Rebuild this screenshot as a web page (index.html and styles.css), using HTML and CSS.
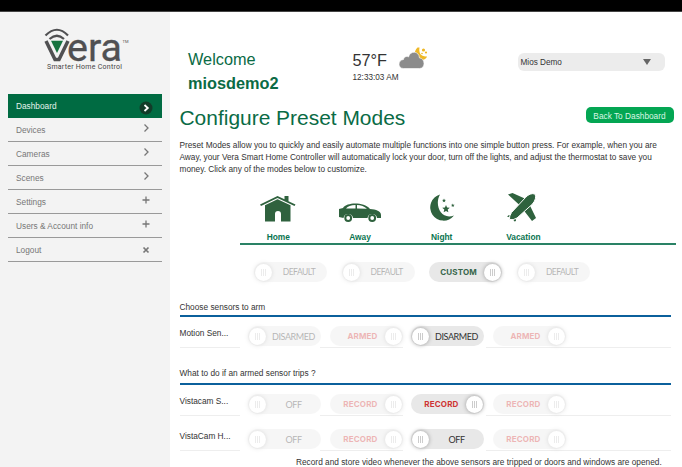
FILE: index.html
```html
<!DOCTYPE html>
<html lang="en">
<head>
<meta charset="utf-8">
<title>Vera - Configure Preset Modes</title>
<link rel="stylesheet" href="styles.css">
</head>
<body>
<div class="topbar"></div>
<div class="page">
  <aside class="sidebar">
    <div class="logo">
      <svg class="logo-art" width="90" height="50" viewBox="0 0 90 50">
        <g fill="none" stroke="#505052" stroke-width="2.200">
          <path d="M2.500 7.500Q14 -4 25 7.500"/>
          <path d="M6.500 11Q14 4.500 21 11"/>
        </g>
        <path d="M3 13L12 31.500H16L25 13" fill="none" stroke="#505052" stroke-width="3.500"/>
        <path d="M8 12.800H20L14 25Z" fill="#16733f"/>
        <text class="logo-word" x="24" y="33" textLength="55" lengthAdjust="spacingAndGlyphs">era</text>
        <text class="logo-tm" x="79.500" y="15">TM</text>
        <text class="logo-tag" x="4" y="40.500" textLength="75">Smarter Home Control</text>
      </svg>
    </div>
    <nav class="nav">
      <a class="item active"><span>Dashboard</span><svg width="14" height="14" viewBox="0 0 14 14"><circle cx="7" cy="7" r="6.500" fill="#123b29"/><path d="M5.500 4L8.800 7L5.500 10" stroke="#fff" stroke-width="1.800" fill="none"/></svg></a>
      <a class="item"><span>Devices</span><svg class="up" width="14" height="14" viewBox="0 0 14 14"><path d="M5.500 3.500L9 7L5.500 10.500"/></svg></a>
      <a class="item"><span>Cameras</span><svg class="up" width="14" height="14" viewBox="0 0 14 14"><path d="M5.500 3.500L9 7L5.500 10.500"/></svg></a>
      <a class="item"><span>Scenes</span><svg class="up" width="14" height="14" viewBox="0 0 14 14"><path d="M5.500 3.500L9 7L5.500 10.500"/></svg></a>
      <a class="item"><span>Settings</span><svg class="up" width="14" height="14" viewBox="0 0 14 14"><path d="M7 3.500V10.500M3.500 7H10.500"/></svg></a>
      <a class="item"><span>Users &amp; Account info</span><svg class="up" width="14" height="14" viewBox="0 0 14 14"><path d="M7 3.500V10.500M3.500 7H10.500"/></svg></a>
      <a class="item"><span>Logout</span><svg width="14" height="14" viewBox="0 0 14 14"><path d="M4.500 4.500L9.500 9.500M9.500 4.500L4.500 9.500" stroke-width="1.700"/></svg></a>
    </nav>
  </aside>
  <main class="main">
    <header class="header">
      <div class="welcome"><div>Welcome</div><strong>miosdemo2</strong></div>
      <div class="weather">
        <div class="now"><span class="temp">57°F</span>
          <svg width="30" height="22" viewBox="0 0 30 22"><path d="M18.500 .5C14.500 4 15 11 19.500 12.500C23 14 27.500 12 28 9.500C22 10 19.500 6 20.500 .5Z" fill="#eeb827"/><g fill="#eeb827"><circle cx="24.500" cy="3" r="1.600"/><circle cx="27" cy="5.500" r="1.100"/><circle cx="23" cy="6.500" r=".8"/></g><path d="M4.500 21.500C-1.500 21.500 -1.500 13 4.500 12.500C5 9.500 8 9 9.500 10C11 3.500 20 3.500 20.500 11C26 11 27 21.500 20.500 21.500Z" fill="#8b8b8b" stroke="#fff" stroke-width=".6"/></svg>
        </div>
        <div class="clock">12:33:03 AM</div>
      </div>
      <div class="select"><span>Mios Demo</span><i class="caret"></i></div>
    </header>
    <div class="title-row"><h1>Configure Preset Modes</h1><a class="back">Back To Dashboard</a></div>
    <p class="intro">Preset Modes allow you to quickly and easily automate multiple functions into one simple button press. For example, when you are<br>Away, your Vera Smart Home Controller will automatically lock your door, turn off the lights, and adjust the thermostat to save you<br>money. Click any of the modes below to customize.</p>
    <div class="modes">
      <div class="mode">
        <svg width="44" height="32" viewBox="0 0 44 32"><path d="M4 14.500L21.500 6L28.500 9.300V6H32.500V11.300L39.500 14.500L38.500 16L21.500 8L5 16Z"/><path d="M9 15.200L21.500 9.200L34.500 15.200V31.500H25V24Q25 21 22 21Q19 21 19 24V31.500H9Z"/></svg>
        <span>Home</span></div>
      <div class="mode">
        <svg width="44" height="32" viewBox="0 0 44 32"><path d="M1 27V19L5 18C9 12 26 12 32 19C38 19.500 43 21 43 25V28H39A4.800 4.800 0 0 0 29.500 28H15A4.800 4.800 0 0 0 5.500 28Z"/><path d="M8 18.500Q10.500 15 17.500 15V18.500ZM19 15Q25 15 29 18.800L19 18.500Z" fill="#fff"/><g fill="#fff" stroke="#2f623e" stroke-width="2"><circle cx="10.200" cy="28" r="2.900"/><circle cx="34.200" cy="28" r="2.900"/></g></svg>
        <span>Away</span></div>
      <div class="mode">
        <svg width="44" height="32" viewBox="1 0 44 32"><path d="M21 4.500A13.300 13.300 0 1 0 35 25.500C22 30.500 15 15 21 4.500Z"/><path d="M27 15L28.100 17.600L30.800 17.800L28.700 19.600L29.400 22.300L27 20.900L24.600 22.300L25.300 19.600L23.200 17.800L25.900 17.600Z"/><path d="M25 8.500L25.500 9.800L27 9.900L25.900 10.800L26.200 12.200L25 11.500L23.800 12.200L24.100 10.800L23 9.900L24.500 9.800ZM33.800 13.500L34.300 14.700L35.600 14.800L34.600 15.700L34.900 17L33.800 16.300L32.700 17L33 15.700L32 14.800L33.300 14.700Z"/></svg>
        <span>Night</span></div>
      <div class="mode">
        <svg width="44" height="32" viewBox="0 0 44 32"><path d="M7 4.500L11.500 3L26 9.500L35 28L31 31L19 15.500Z"/><path d="M6 26.500L8 25L14.500 27.500L15 31L13.500 31.500L11.500 28.500Z"/><path d="M8.500 29.500Q8 26 10.500 22.500L24.500 7.500Q29 2.500 34 4Q36 8.500 31.500 14L16 28Q12 30.500 8.500 29.500Z" stroke="#fff"/></svg>
        <span>Vacation</span></div>
    </div>
    <div class="presets">
      <div class="switch left faded default"><b>DEFAULT</b><i></i></div>
      <div class="switch left faded default"><b>DEFAULT</b><i></i></div>
      <div class="switch right custom"><b>CUSTOM</b><i></i></div>
      <div class="switch left faded default"><b>DEFAULT</b><i></i></div>
    </div>
    <section class="group first">
      <h2>Choose sensors to arm</h2>
      <div class="row">
        <div class="name">Motion Sen...</div>
        <div class="cell"><div class="switch left faded"><b>DISARMED</b><i></i></div></div>
        <div class="cell lined"><div class="switch right faded red"><b>ARMED</b><i></i></div></div>
        <div class="cell"><div class="switch left"><b>DISARMED</b><i></i></div></div>
        <div class="cell lined last"><div class="switch right faded red"><b>ARMED</b><i></i></div></div>
      </div>
    </section>
    <section class="group second">
      <h2>What to do if an armed sensor trips ?</h2>
      <div class="row">
        <div class="name">Vistacam S...</div>
        <div class="cell"><div class="switch left faded"><b>OFF</b><i></i></div></div>
        <div class="cell lined"><div class="switch right faded red"><b>RECORD</b><i></i></div></div>
        <div class="cell"><div class="switch right red"><b>RECORD</b><i></i></div></div>
        <div class="cell lined last"><div class="switch right faded red"><b>RECORD</b><i></i></div></div>
      </div>
      <div class="row">
        <div class="name">VistaCam H...</div>
        <div class="cell"><div class="switch left faded"><b>OFF</b><i></i></div></div>
        <div class="cell lined"><div class="switch right faded red"><b>RECORD</b><i></i></div></div>
        <div class="cell"><div class="switch left"><b>OFF</b><i></i></div></div>
        <div class="cell lined last"><div class="switch right faded red"><b>RECORD</b><i></i></div></div>
      </div>
    </section>
    <p class="note">Record and store video whenever the above sensors are tripped or doors and windows are opened.</p>
  </main>
</div>
</body>
</html>
```
FILE: styles.css
```css
* { box-sizing: border-box; }
body { margin: 0; height: 467px; overflow: hidden; background: #fff; font-family: "Liberation Sans", Arial, sans-serif; font-size: 8px; color: #333; }
h1, h2, p { margin: 0; font-weight: normal; }
svg, i { display: block; }
.topbar { height: 12px; background: #000; border-bottom: 1px solid #444; }
.page { display: flex; height: 455px; }
.sidebar { width: 170px; flex: none; background: #f3f3f3; }
.logo { height: 82px; padding: 16px 0 0 43px; }
.logo-art { overflow: visible; }
.logo-word { font: 39px Roboto, sans-serif; fill: #505052; stroke: #505052; stroke-width: .3px; }
.logo-tm { font: 4px Roboto, sans-serif; fill: #505052; }
.logo-tag { font: 7px Roboto, sans-serif; fill: #444; }
.nav { margin: 0 8px; }
.item { display: flex; align-items: center; justify-content: space-between; height: 24px; padding: 0 9px 0 8px; border-bottom: 1px solid #999; color: #777; font-size: 8.300px; }
.item svg { fill: none; stroke: #777; stroke-width: 1.3; }
.item svg.up { margin-top: -4px; }
.active { background: #006b42; border: 0; color: #e4f4ec; }
.active svg { stroke: none; margin-top: 3px; }
.main { flex: 1; padding-left: 9.500px; min-width: 0; }
.header { display: flex; height: 87px; }
.welcome { width: 165px; padding: 36px 0 0 8.500px; font-size: 16.300px; line-height: 23.500px; color: #0a6b45; }
.weather { width: 165px; padding: 35px 0 0 8px; }
.now { display: flex; align-items: flex-start; gap: 11px; height: 26px; }
.temp { font-size: 16.300px; line-height: 26px; width: 35px; }
.clock { font-size: 8.200px; line-height: 9px; }
.select { display: flex; align-items: center; justify-content: space-between; width: 147px; height: 18px; margin: 41px 0 0 8.500px; padding: 0 14px 0 2.500px; border-radius: 6px; background: #ececec; font-size: 8.200px; }
.caret { border: 4.500px solid transparent; border-top: 6px solid #666; border-bottom: 0; }
.title-row { display: flex; justify-content: space-between; height: 41px; padding: 7px 8.500px 0 0; }
h1 { font-size: 20.950px; line-height: 24px; color: #0a6b45; }
.back { width: 88px; height: 16px; margin-top: 1px; border-radius: 5px; background: #04a653; color: #d9f6e5; font-size: 8.300px; line-height: 18px; text-align: center; }
.intro { height: 52px; font-size: 8.270px; line-height: 12px; white-space: nowrap; }
.modes { display: grid; grid-template-columns: repeat(4, 81.700px); height: 53px; margin: 0 6px 0 60.500px; border-bottom: 2px solid #2a8265; }
.mode { display: flex; flex-direction: column; align-items: center; padding-right: 5px; color: #0a7550; font-size: 8.400px; font-weight: bold; }
.mode svg { fill: #2f623e; margin: -2px 0 10px; flex: none; }
.mode span { line-height: 10px; }
.presets { display: flex; gap: 14.700px; height: 56px; padding: 17px 0 0 74.500px; }
.switch { display: flex; align-items: center; justify-content: space-between; width: 73px; height: 20px; padding: 0 1px; border-radius: 10px; background: #e8e8e8; color: #333; }
.switch b { order: 1; flex: 1; text-align: center; font: 9px Lato, sans-serif; letter-spacing: -.4px; }
.switch i { width: 17px; height: 17px; border-radius: 50%; background: repeating-linear-gradient(90deg, #ccc 0 1px, transparent 1px 2px) center / 5px 7px no-repeat, #fff; box-shadow: 0 0 4px #999; }
.switch.left b { padding-left: 1px; }
.switch.default b { font-size: 8.500px; letter-spacing: -.550px; padding-left: 0; }
.switch.right i { order: 2; }
.switch.right b { text-align: right; padding-right: 7.500px; font: bold 8px Inter, sans-serif; letter-spacing: .150px; }
.switch.custom b { color: #37664b; }
.switch.red { color: #ce3434; }
.faded { opacity: .36; }
h2 { height: 20px; padding-top: 1px; font-size: 8.300px; line-height: 10px; border-bottom: 2px solid #0b609c; }
.first h2 { height: 16px; margin-bottom: 1px; }
.second h2 { height: 37px; padding-top: 20px; margin-bottom: 1px; }
.group { display: flow-root; margin-right: 11px; }
.row { display: grid; grid-template-columns: 60.500px 80px 83px 83px 1fr; height: 30px; }
.row + .row { margin-top: 5px; }
.name { border-bottom: 1px solid #eee; font-size: 8.300px; line-height: 10px; padding-top: 9.500px; }
.cell { padding: 8px 0 0 8px; }
.lined { border-bottom: 1px solid #eee; }
.cell.lined { padding-left: 10px; }
.cell.last { padding-left: 7px; }
.note { padding: 6px 0 0 116.500px; font-size: 8.300px; line-height: 10px; white-space: nowrap; }
```
